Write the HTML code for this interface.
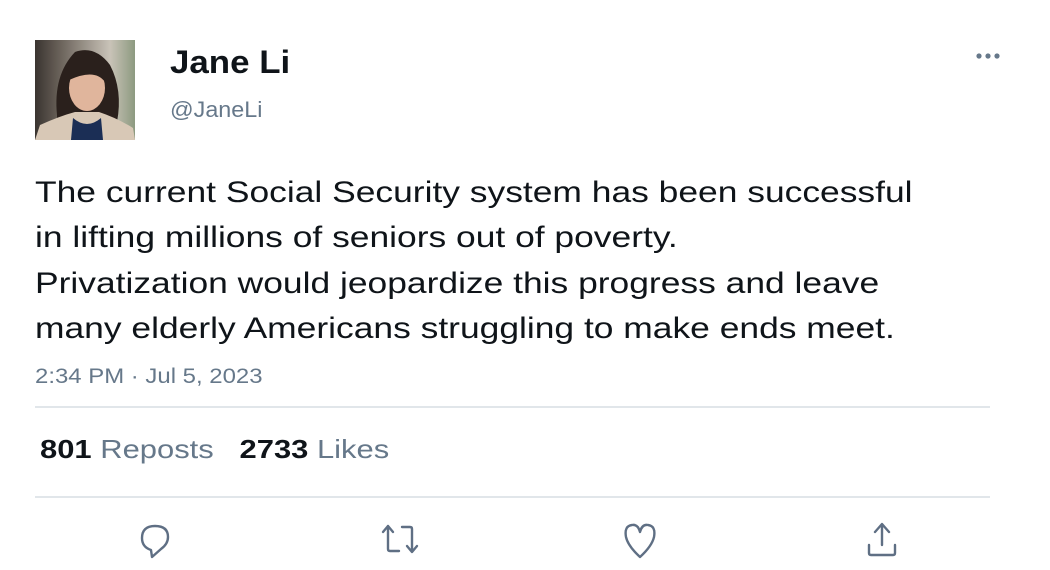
<!DOCTYPE html>
<html><head><style>
body{margin:0;width:1050px;height:570px;background:#fff;font-family:"Liberation Sans",Arial,sans-serif;position:relative;overflow:hidden}
.a{position:absolute;transform-origin:0 0;white-space:nowrap}
</style></head><body>
<div class="a" style="left:35px;top:40px;width:100px;height:100px;overflow:hidden;background:linear-gradient(90deg,#3a3430 0%,#6a625a 25%,#c9c3b8 75%,#8d9a80 100%)">
<svg width="100" height="100" viewBox="0 0 100 100">
<path d="M22 75 Q18 35 40 12 Q60 5 75 25 Q88 50 82 82 L22 82Z" fill="#2a201c"/>
<ellipse cx="52" cy="48" rx="18" ry="23" fill="#e0b59c"/>
<path d="M34 40 Q40 16 62 22 Q70 30 70 42 Q60 28 34 40Z" fill="#2a201c"/>
<path d="M0 100 L5 85 Q25 76 40 72 L64 72 Q82 78 98 88 L100 100Z" fill="#d8c8b6"/>
<path d="M38 78 Q52 90 66 78 L68 100 L36 100Z" fill="#1b2e55"/>
</svg></div>
<div class="a" style="left:170px;top:44px;font-size:32px;font-weight:bold;color:#0f1419;transform:scaleX(1.09)">Jane Li</div>
<div class="a" style="left:170px;top:97px;font-size:22px;color:#66788a;transform:scaleX(1.06)">@JaneLi</div>
<svg class="a" style="left:970px;top:48px" width="36" height="16" fill="#66788a"><circle cx="9" cy="8" r="2.6"/><circle cx="18" cy="8" r="2.6"/><circle cx="27" cy="8" r="2.6"/></svg>
<div class="a" style="left:35px;top:170px;font-size:30px;line-height:45.3px;color:#0f1419;transform:scaleX(1.18)">The current Social Security system has been successful<br>in lifting millions of seniors out of poverty.<br>Privatization would jeopardize this progress and leave<br>many elderly Americans struggling to make ends meet.</div>
<div class="a" style="left:35px;top:365px;font-size:21px;color:#66788a;transform:scaleX(1.14)">2:34 PM · Jul 5, 2023</div>
<div class="a" style="left:35px;top:406px;width:955px;height:2px;background:#e1e6ea"></div>
<div class="a" style="left:40px;top:434px;font-size:26px;color:#66788a;transform:scaleX(1.19)"><b style="color:#0f1419">801</b> Reposts &nbsp;&nbsp;<b style="color:#0f1419">2733</b> Likes</div>
<div class="a" style="left:35px;top:496px;width:955px;height:2px;background:#e1e6ea"></div>
<svg class="a" style="left:0;top:510px" width="1050" height="60" fill="none" stroke="#5f6f84" stroke-width="2.4" stroke-linecap="round" stroke-linejoin="round">
<path d="M142 28 Q142 16 155 16 Q168 16 168 27 Q168 34 161 39 L152 47 L151 40 Q142 37 142 28Z"/>
<path d="M383 22 L388 16 L393 22 M388 16 V39 Q388 41 390 41 H399 M402 17 H410 Q412 17 412 19 V41 M407 36 L412 42 L417 36"/>
<path d="M640 47 Q628 36 626 27 Q624 16 632 15 Q638 14 640 22 Q642 14 648 15 Q656 16 654 27 Q652 36 640 47Z"/>
<path d="M882 15 V35 M875 22 L882 14 L889 22 M869 35 V43 Q869 45 871 45 H893 Q895 45 895 43 V35"/>
</svg>
</body></html>
